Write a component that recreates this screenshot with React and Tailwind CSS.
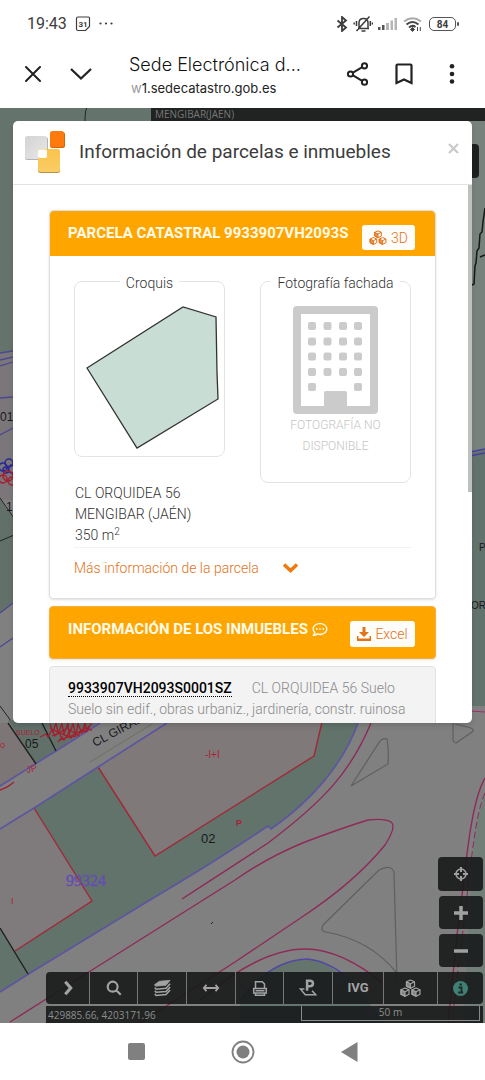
import React from "react";
import { FaRegCommentDots } from "react-icons/fa";

const uiFont = "font-['Inter','Roboto',sans-serif]";

function StatusBar() {
  return (
    <div className="flex h-12 shrink-0 items-center justify-between pl-[27px] pr-[26px] text-[#3c3c3c]">
      <div className="flex items-center gap-2">
        <span className="font-['Roboto',sans-serif] text-base">19:43</span>
        <svg className="h-4 w-4" viewBox="0 0 16 16" fill="none" stroke="currentColor" strokeWidth="1.2" aria-hidden="true">
          <path d="M3 1h10.5q1 0 1 1v8.5L10.500 14.500H3q-1.500 0-1.500-1.500V2.500Q1.500 1 3 1z" />
          <text x="8" y="10.500" fontSize="8" fontWeight="700" textAnchor="middle" fill="currentColor" stroke="none" fontFamily="Roboto, sans-serif">31</text>
        </svg>
        <svg className="h-1 w-[14px]" viewBox="0 0 14 4" fill="currentColor" aria-hidden="true">
          <circle cx="1.500" cy="1.500" r="1.100" /><circle cx="7" cy="1.500" r="1.100" /><circle cx="12.500" cy="1.500" r="1.100" />
        </svg>
      </div>
      <div className="flex items-center gap-[5px]">
        <svg className="h-4 w-3" viewBox="0 0 12 16" fill="none" stroke="currentColor" strokeWidth="1.800" aria-hidden="true">
          <path d="M1.500 4.500l8.500 7L6 15V1l4 3.500-8.500 7" />
        </svg>
        <svg className="h-[18px] w-[20px]" viewBox="0 0 20 18" fill="none" stroke="currentColor" strokeWidth="1.500" aria-hidden="true">
          <path d="M5 13.500h11M6 13V8q0-4.500 4.500-4.500T15 8v5M8.500 16h4M3.500 16L16.500 1.500M3.500 6v5M1.200 7.500v2M17.300 6v5M19.400 7.500v2" />
        </svg>
        <svg className="h-[14px] w-5" viewBox="0 0 20 14" aria-hidden="true">
          <g fill="#555"><rect x="0" y="10" width="2.500" height="3" /><rect x="4" y="8" width="2.500" height="5" /></g>
          <g fill="#b5b5b5"><rect x="8" y="6" width="3" height="7" /><rect x="12.500" y="3.500" width="2.500" height="9.500" /><rect x="16.500" y="1" width="2.500" height="12" /></g>
        </svg>
        <svg className="h-[15px] w-[19px]" viewBox="0 0 19 15" fill="none" strokeWidth="2" aria-hidden="true">
          <path d="M1 4.500Q9.500-2 18 4.500" stroke="#aaa" />
          <path d="M3.500 7.500Q9.500 2.500 15.500 7.500M6 10.500Q9.500 7.500 12.500 10" stroke="#444" />
          <path d="M9.500 10.500l2 2-2 2-2-2zM14.500 10v4M17.300 10v4" fill="#444" stroke="#444" strokeWidth="1" />
        </svg>
        <div className="ml-[2px] flex items-center gap-px">
          <span className="flex h-[14px] w-[27px] items-center justify-center rounded-[5px] border border-[#555] font-['Roboto',sans-serif] text-[10px] font-bold">84</span>
          <span className="h-1 w-[2px] rounded bg-[#555]" />
        </div>
      </div>
    </div>
  );
}

function BrowserBar() {
  return (
    <header className={`flex h-[60px] shrink-0 items-center pb-2 pl-[21px] pr-[15px] text-[#222] ${uiFont}`}>
      <button aria-label="Cerrar pestaña" className="p-1">
        <svg className="h-4 w-4" viewBox="0 0 16 16" fill="none" stroke="currentColor" strokeWidth="2" strokeLinecap="round"><path d="M1 1l14 14M15 1L1 15" /></svg>
      </button>
      <button aria-label="Minimizar" className="ml-[21px] p-1">
        <svg className="h-4 w-[22px]" viewBox="0 0 22 16" fill="none" stroke="currentColor" strokeWidth="2.300"><path d="M1 3l10 9.500L21 3" /></svg>
      </button>
      <div className="ml-[33px] min-w-0 flex-1 pt-[2px]">
        <div className="truncate text-lg font-light leading-6 text-[#111]">Sede Electrónica d...</div>
        <div className="pl-[2px] pt-px text-[13px] leading-5"><span className="text-[#999]">w</span>1.sedecatastro.gob.es</div>
      </div>
      <div className="flex shrink-0 items-center gap-[17px]">
        <button aria-label="Compartir" className="p-1">
          <svg className="h-6 w-6" viewBox="0 0 24 24" fill="none" stroke="currentColor" strokeWidth="2"><circle cx="4.500" cy="12" r="2.600" /><circle cx="18.500" cy="3.800" r="2.600" /><circle cx="18.500" cy="20.200" r="2.600" /><path d="M7 10.600l9.200-5.500M7 13.400l9.200 5.500" /></svg>
        </button>
        <button aria-label="Guardar marcador" className="p-1">
          <svg className="h-[22px] w-[18px]" viewBox="0 0 18 22" fill="none" stroke="currentColor" strokeWidth="2.200"><path d="M1.500 2.500q0-1 1-1h13q1 0 1 1V20L9 16.500 1.500 20z" /></svg>
        </button>
        <button aria-label="Más opciones" className="px-2 py-1">
          <svg className="h-5 w-5" viewBox="0 0 20 20" fill="currentColor"><circle cx="10" cy="2.300" r="2.300" /><circle cx="10" cy="10" r="2.300" /><circle cx="10" cy="17.500" r="2.300" /></svg>
        </button>
      </div>
    </header>
  );
}

function CubesIcon({ className }) {
  const cubes = ["translate(5.500 0)", "translate(0 8)", "translate(11 8)"];
  return (
    <svg className={className} viewBox="0 0 21 18" fill="none" stroke="currentColor" strokeWidth="1.200" strokeLinejoin="round" aria-hidden="true">
      {cubes.map((place) => (
        <g key={place} transform={place}>
          <path d="M5 1l4 1.800v4.400L5 9.300 1 7.200V2.800z" />
          <path d="M1 2.800l4 2v4.500L1 7.200z" fill="currentColor" fillOpacity=".75" />
          <path d="M5 4.800l4-2" />
        </g>
      ))}
    </svg>
  );
}

function CadastralMap() {
  return (
    <svg className="absolute inset-0 h-full w-full" viewBox="0 108 485 915" preserveAspectRatio="xMidYMid slice" fill="none" aria-hidden="true">
      <rect x="0" y="108" width="485" height="915" fill="#808080" />
      <path d="M0 108H485V450L460 453V260H0z" fill="#65736d" />
      <path d="M470 121H485V450L470 453z" fill="#76827b" />
      <path d="M470 453L485 450V706H470z" fill="#62726c" />
      <path d="M85 121q0-13 3-15" stroke="#222" />
      <path d="M0 270l13-10" stroke="#59645f" />
      <path d="M0 353l13-2V500H0z" fill="#7a7679" />
      <path d="M0 260H14V351L0 353z" fill="#65736d" />
      <path d="M0 499l14 20V603L0 613z" fill="#62706a" />
      <path d="M0 541l14-6M0 498l14 20M0 706l14 19" stroke="#222" />
      <path d="M0 353l13-2M0 360l13-3M0 366l13-4M0 398l13-1M0 435l13-7M0 613l13-10M0 647l13-9" stroke="#4c4793" strokeWidth="1.300" />
      <g stroke="#282898" strokeWidth="1.500"><circle cx="3" cy="467" r="4" /><circle cx="9" cy="463" r="4" /><circle cx="12" cy="469" r="4" /><circle cx="6" cy="470" r="3" /></g>
      <g stroke="#a81e30" strokeWidth="1.500"><circle cx="3" cy="479" r="4" /><circle cx="8" cy="476" r="5" /><circle cx="12" cy="481" r="4" /></g>
      <path d="M485 208l-2 14-1 10-2 2-1 14-2 3-1 12-1 3-1 18-4 2M480 257l5-2" stroke="#171917" strokeWidth="1.500" />
      <path d="M470 452l15-3M470 456l15-3" stroke="#4840a0" strokeWidth="1.500" />
      <path d="M470 711l15 1" stroke="#a02e64" />

      <path d="M0 723H8L36 764 0 786z" fill="#7d7677" />
      <path d="M8 720H97L97 723 56 751 36 764z" fill="#62706a" />
      <path d="M0 829L34 808 92 901 15 951 0 928z" fill="#7f7b7c" />
      <path d="M98 767L167 722H322L314 756 155 856z" fill="#7f7a79" />
      <path d="M34 808L98 767 155 856 314 756 322 722H358C343 765 310 802 271 829L268 826Q220 858 180 882L35 970 0 992V928L15 951 92 901z" fill="#62736b" />
      <path d="M240 1000Q270 958 308 959Q335 959 385 1023H240z" fill="#66746e" />
      <path d="M485 795Q474 825 473 858L463 1023H485z" fill="#727f79" />
      <path d="M98 767L155 856 314 756 322 722M34 808L92 901 15 951" stroke="#a02838" strokeWidth="1.400" />
      <path d="M0 786L56 751 100 723M0 829L34 808 98 767 167 723M358 723C343 765 310 802 271 829L268 826Q220 858 180 882L150 900 35 970 0 992" stroke="#5c55a0" strokeWidth="1.600" />
      <path d="M8 723L36 764M42 723L56 751M0 928L28 974" stroke="#202020" strokeWidth="1.400" />
      <path d="M90 762L152 724" stroke="#716e60" />
      <path d="M371 723C351 771 325 800 268 843Q250 855 182 899M10 1022L92 970 235 880Q268 857 305 842Q342 828 368 820Q385 818 391 822Q397 826 385 845Q355 882 302 917L235 962 140 1023M200 1000Q260 949 305 949Q342 949 385 985M485 778C469 805 465 880 457 935L448 1023" stroke="#8e2a58" strokeWidth="1.400" />
      <path d="M485 793C473 820 470 880 458 970L452 1023" stroke="#8e2a58" strokeDasharray="7 3" />
      <path d="M240 1000Q270 960 308 959Q335 962 360 990" stroke="#5148a4" strokeWidth="1.500" />
      <path d="M351 786L378 744Q382 737 387 739Q389 750 388 764zM453 723V740Q455 745 459 741L472 732Q475 730 471 728L455 724M323 925L379 870Q391 864 394 872L397 980M323 925Q320 932 326 932Q370 940 396 972" stroke="#5d605c" strokeWidth="1.200" />
      <g fontFamily="Liberation Sans, sans-serif" fill="#191919" fontSize="12">
        <text x="0" y="421">01</text>
        <text x="6" y="511">1</text>
        <text x="479" y="551" fontSize="10">P</text>
        <text x="471" y="609" fontSize="10">OR</text>
        <text x="25" y="748" fontSize="12">05</text>
        <text x="201" y="843" fontSize="13">02</text>
        <text x="95" y="747" transform="rotate(-28 95 747)">CL GIRALDA</text>
      </g>
      <g fontFamily="Liberation Sans, sans-serif" fill="#ab1f35" fontSize="9">
        <text x="205" y="758" fontSize="10">-I+I</text>
        <text x="236" y="826" fontWeight="700">P</text>
        <text x="11" y="904">I</text>
        <text x="0" y="748">o</text>
        <text x="27" y="773" transform="rotate(-12 27 773)">JP</text>
        <text x="16" y="735" fontSize="7">SUELO</text>
      </g>
      <path d="M40 737l6-3 2 3 4-7 3 6 4-4 2 5M50 724l3 8 3-9 2 10 4-9 2 10 4-11 1 12 4-11 3 11 2-11 4 9 3-10 2 8 5-9M58 742l4-5 2 3 4-6 3 4 4-5 3 3 4-6 3 2 4-6M50 728l9 5 8-5 9 6 9-6 7 2M52 736l8-3 9 4 8-4 8-3M60 740l8-3 8-1" stroke="#a51f2e" strokeWidth="1.300" />
      <path d="M0 790q7-2 14-8" stroke="#a51f2e" strokeWidth="1.300" />
      <text x="66" y="886" fontFamily="Liberation Serif, serif" fontSize="16" fill="#654eb0" stroke="#654eb0" strokeWidth=".4">99324</text>
      <path d="M211 924l2-2" stroke="#222" />
    </svg>
  );
}

function CatastroLogo() {
  return (
    <svg className="h-[42px] w-10" viewBox="0 0 40 42" aria-hidden="true">
      <defs>
        <linearGradient id="logoGrey" x1="0" y1="0" x2="1" y2="1"><stop stopColor="#d3d3d5" /><stop offset="1" stopColor="#e8e8e8" /></linearGradient>
        <linearGradient id="logoGold" x1="0" y1="0" x2="0" y2="1"><stop stopColor="#fbc44b" /><stop offset="1" stopColor="#f9cc65" /></linearGradient>
      </defs>
      <rect x="0" y="6" width="23" height="23" rx="2.500" fill="#b4b4b6" />
      <rect x="0" y="5" width="22" height="23" rx="2.500" fill="url(#logoGrey)" />
      <rect x="13" y="19" width="22" height="23" rx="2.500" fill="#b99245" />
      <rect x="13" y="18" width="22" height="23" rx="2.500" fill="url(#logoGold)" />
      <rect x="13" y="18.500" width="9" height="8.500" rx="2" fill="#fff" />
      <rect x="25" y="1" width="15" height="16" rx="2.500" fill="#d4650c" />
      <rect x="25" y="0" width="14" height="16" rx="2.500" fill="#ff7a0d" />
    </svg>
  );
}

function BuildingPicture() {
  const columns = [14, 29.500, 45, 60];
  const rows = [15, 30.500, 45.500, 61];
  return (
    <svg className="h-[108px] w-[85px]" viewBox="0 0 85 108" fill="#cbcbcb" aria-hidden="true">
      <path fillRule="evenodd" d="M4 0h77q4 0 4 4v100q0 4-4 4H4q-4 0-4-4V4q0-4 4-4zM8 8v92h23V87q0-2 2-2h19q2 0 2 2v13h23V8z" />
      {rows.map((y) => columns.map((x) => <rect key={`${x}-${y}`} x={x + 1} y={y + 1} width="8" height="8" rx="2" />))}
      <rect x="15" y="77" width="8" height="8" rx="2" />
      <rect x="61" y="77" width="8" height="8" rx="2" />
    </svg>
  );
}

function ParcelDialog() {
  return (
    <section role="dialog" aria-labelledby="dialog-title" className="relative mx-[13px] flex min-h-0 flex-1 flex-col overflow-hidden rounded-[5px] bg-white font-['Roboto',sans-serif] shadow-md">
      <div className="flex h-16 shrink-0 items-center border-b border-[#e2e2e2] pb-px pl-3 pr-[10px]">
        <CatastroLogo />
        <h1 id="dialog-title" className="ml-[14px] text-[19px] leading-6 text-[#3c3c3c]">Información de parcelas e inmuebles</h1>
        <button aria-label="Cerrar" className="ml-auto mb-2 p-[3px] text-[#c9c9c9]">
          <svg className="h-[11px] w-[11px]" viewBox="0 0 11 11" stroke="currentColor" strokeWidth="2.200"><path d="M1 1l9 9M10 1L1 10" /></svg>
        </button>
      </div>
      <div className="relative min-h-0 flex-1 overflow-hidden px-9 pt-[25px]">
        <div className="absolute right-0 top-0 h-[57%] w-1 bg-[#bfc1c0]" />
        <article className="rounded border border-[#dedede] shadow-sm">
          <div className="flex h-[45px] items-start justify-between rounded-t bg-[#ffa500] pl-[18px] pr-5">
            <h2 className="whitespace-nowrap pt-3 text-[15px] font-bold leading-[21px] text-[#fffbea]">PARCELA CATASTRAL 9933907VH2093S</h2>
            <button className="mt-[14px] flex h-[25px] w-[53px] shrink-0 items-center justify-center gap-1 rounded-[3px] bg-[#fffdfa] text-sm font-light text-[#e2731a]">
              <CubesIcon className="h-[15px] w-[18px]" />3D
            </button>
          </div>
          <div className="px-6 pb-[18px] pt-[15px] text-sm text-[#333]">
            <div className="flex items-start justify-between">
              <fieldset className="h-[186px] w-[151px] rounded-lg border border-[#e3e3e3] text-center">
                <legend className="mx-auto px-[6px] pt-1 font-light leading-4">Croquis</legend>
                <svg className="mx-auto mt-[14px] block h-[145px] w-[140px]" viewBox="-6 0 140 145" aria-label="Croquis de la parcela">
                  <path d="M1 63L97 2 130 12 131 67 132 94 51 143z" fill="#c8ddd4" stroke="#333" strokeWidth="1.300" />
                </svg>
              </fieldset>
              <fieldset className="h-[212px] w-[151px] rounded-lg border border-[#e3e3e3] text-center">
                <legend className="mx-auto whitespace-nowrap px-[6px] pt-1 font-light leading-4">Fotografía fachada</legend>
                <div className="mt-[15px] flex flex-col items-center text-xs font-light leading-[21px] text-[#c5c5c5]">
                  <BuildingPicture />
                  <p className="pt-px">FOTOGRAFÍA NO<br />DISPONIBLE</p>
                </div>
              </fieldset>
            </div>
            <address className="pl-px pb-px font-light not-italic leading-[21px]">
              CL ORQUIDEA 56<br />MENGIBAR (JAÉN)<br />350 m<sup className="text-[10px]">2</sup>
            </address>
            <button className="flex w-full items-center gap-6 border-t border-[#f3f3f3] pb-[2px] pt-[10px] text-left font-light leading-5 text-[#e2731a]">
              Más información de la parcela
              <svg className="h-[10px] w-[15px]" viewBox="0 0 15 10" fill="none" stroke="#f07a12" strokeWidth="3.500"><path d="M1 1.500l6.500 6 6.500-6" /></svg>
            </button>
          </div>
        </article>
        <div className="mt-[7px] flex h-[53px] items-start justify-between rounded border border-[#f2b03c] bg-[#ffa500] pl-[18px] pr-5 shadow-sm">
          <h2 className="flex items-center gap-1 whitespace-nowrap pt-3 text-[15px] font-bold leading-[21px] text-[#fffbea]">
            INFORMACIÓN DE LOS INMUEBLES <FaRegCommentDots className="h-[15px] w-4" />
          </h2>
          <button className="mt-[14px] flex h-[26px] w-[65px] shrink-0 items-center justify-center gap-1 rounded-[3px] bg-[#fffdfa] text-sm font-light text-[#e2731a]">
            <svg className="h-[14px] w-[14px]" viewBox="0 0 14 14" fill="currentColor" aria-hidden="true"><path d="M5.500 0h3v5H12L7 10 2 5h3.500zM0 9h1.500v2.500h11V9H14v5H0z" /></svg>
            Excel
          </button>
        </div>
        <article className="mt-[7px] rounded border border-[#dfe1e3] bg-[#f3f3f3] px-[18px] pb-4 pt-[11px] text-sm font-light leading-[21px] text-[#8a8a8a]">
          <a href="#inmueble" className="mr-[20px] border-b border-dotted border-black font-medium text-black">9933907VH2093S0001SZ</a>
          <span>CL ORQUIDEA 56 Suelo</span>
          <p className="whitespace-nowrap">Suelo sin edif., obras urbaniz., jardinería, constr. ruinosa</p>
        </article>
      </div>
    </section>
  );
}

const tools = [
  ["Ocultar", <path d="M7 3l6 7-6 7" strokeWidth="3.500" />],
  ["Buscar", <path d="M14 8.500a5.500 5.500 0 1 1-11 0a5.500 5.500 0 0 1 11 0M12.500 12.500l5 5" strokeWidth="2.400" />],
  ["Capas", <><path d="M1.500 6.500L7 2.500l12-1-4.500 5.500-11.500 1z" fill="currentColor" strokeWidth=".8" /><path d="M2 9.500l1.500 1.800 11-1 4.500-5M2 13l1.500 1.800 11-1 4.500-5M2 16.500l1.500 1.800 11-1 4.500-5" strokeWidth="1.700" /></>],
  ["Medir", <path d="M2 10h16M5 6.500L2 10l3 3.500M15 6.500l3 3.500-3 3.500" strokeWidth="2" />],
  ["Imprimir", <path d="M5 10V3h7.500L15 5.500V10M3 10.500h14v5H3zM5 15.500V18h10v-2.500M5 13h10" strokeWidth="1.700" />],
  ["Parcela", <><path d="M9 13V2h3q3.500 0 3.500 3t-3.500 3H9" strokeWidth="2.800" /><path d="M6 11H1.500l5.500 6.500h11.500L14.500 13" strokeWidth="1.700" /></>],
];

function MapTools() {
  const cell = "flex items-center justify-center border-r border-[#777] bg-[#171a19]/90";
  const zoomButton = "flex h-[33px] w-11 items-center justify-center rounded bg-[#171a19]/90";
  return (
    <>
      <div className="relative mr-[2px] mt-[134px] flex flex-col items-end gap-[5px] text-[#a0a0a0]">
        <button aria-label="Mi ubicación" className="flex h-[34px] w-[45px] items-center justify-center rounded bg-[#171a19]/90">
          <svg className="h-4 w-4" viewBox="0 0 16 16" fill="none" stroke="currentColor" strokeWidth="1.600"><circle cx="8" cy="8" r="5" /><path d="M8 1v5M8 10v5M1 8h5M10 8h5" strokeWidth="2" /></svg>
        </button>
        <button aria-label="Acercar" className={zoomButton}>
          <svg className="h-[14px] w-[14px]" viewBox="0 0 14 14" stroke="currentColor" strokeWidth="3.500"><path d="M0 7h14M7 0v14" /></svg>
        </button>
        <button aria-label="Alejar" className={zoomButton}>
          <svg className="h-[14px] w-[14px]" viewBox="0 0 14 14" stroke="currentColor" strokeWidth="3.500"><path d="M0 7h14" /></svg>
        </button>
      </div>
      <nav aria-label="Herramientas del mapa" className="relative ml-[46px] mr-[2px] mt-[5px] grid h-8 shrink-0 grid-cols-[44fr_48fr_49fr_49fr_48fr_49fr_51fr_54fr_45fr] overflow-hidden rounded text-[#a3a3a3]">
        {tools.map(([label, icon]) => (
          <button key={label} aria-label={label} className={cell}>
            <svg className="h-[18px] w-[18px]" viewBox="0 0 20 20" fill="none" stroke="currentColor">{icon}</svg>
          </button>
        ))}
        <button className={`${cell} font-['Roboto',sans-serif] text-[13px] font-bold`}>IVG</button>
        <button aria-label="Vista 3D" className={cell}><CubesIcon className="h-[18px] w-[21px]" /></button>
        <button aria-label="Información" className="flex items-center justify-center bg-[#171a19]/90">
          <svg className="h-[15px] w-[15px]" viewBox="0 0 15 15"><circle cx="7.500" cy="7.500" r="7.500" fill="#3f8074" /><path d="M5.500 6.500h3v5M5.200 11.500h5M6.500 3.500h2.300" stroke="#1d2926" strokeWidth="1.800" fill="none" /></svg>
        </button>
      </nav>
      <div className="relative ml-[46px] mr-[2px] mt-[2px] flex h-[17px] shrink-0 bg-[#171a19]/90 pr-[3px] font-['Open_Sans',sans-serif] text-[10px] text-[#8d8f8e]">
        <span className="flex-1 pl-[2px] pt-px leading-[17px]">429885.66, 4203171.96</span>
        <span className="mb-[2px] w-[179px] border border-t-0 border-[#8a8a8a] text-center leading-[13px]">50 m</span>
      </div>
    </>
  );
}

export default function App() {
  return (
    <div className="flex h-screen flex-col bg-white">
      <StatusBar />
      <BrowserBar />
      <main className="relative flex min-h-0 flex-1 flex-col overflow-hidden">
        <CadastralMap />
        <div className="absolute right-[6px] top-[36px] h-[34px] w-11 rounded bg-[#1e201f]" />
        <div className="relative ml-[151px] h-[13px] shrink-0 bg-[#212322] pl-1 font-['Open_Sans',sans-serif] text-[10px] leading-3 text-[#777]">MENGIBAR(JAEN)</div>
        <ParcelDialog />
        <MapTools />
      </main>
      <footer className="flex h-[57px] shrink-0 items-center justify-center gap-[86px] bg-white text-[#808080]">
        <button aria-label="Recientes"><svg className="h-[17px] w-[17px]" viewBox="0 0 17 17" fill="currentColor"><rect width="17" height="17" rx="2" /></svg></button>
        <button aria-label="Inicio"><svg className="h-6 w-6" viewBox="0 0 24 24"><circle cx="12" cy="12" r="10.500" fill="none" stroke="currentColor" strokeWidth="1.800" /><circle cx="12" cy="12" r="6.500" fill="currentColor" /></svg></button>
        <button aria-label="Atrás"><svg className="h-5 w-[17px]" viewBox="0 0 17 20" fill="currentColor"><path d="M16.500 0v20L0 10z" /></svg></button>
      </footer>
    </div>
  );
}
